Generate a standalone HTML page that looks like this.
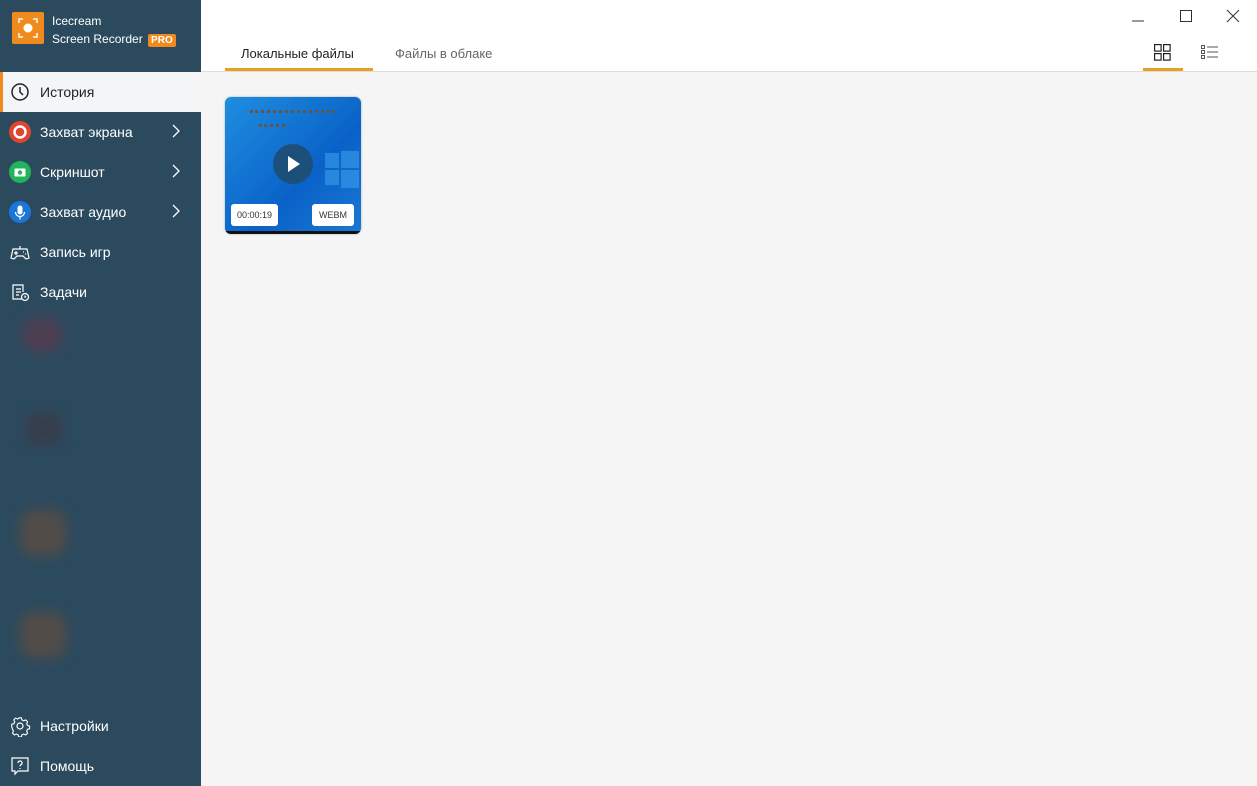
<!DOCTYPE html>
<html><head><meta charset="utf-8"><style>
body{margin:0;width:1257px;height:786px;overflow:hidden;font-family:"Liberation Sans",sans-serif;background:#f5f5f5;position:relative}
.sb{position:absolute;left:0;top:0;width:201px;height:786px;background:#2c4a5e;color:#fff}
.blob{position:absolute;border-radius:14px;filter:blur(6px)}
.item{position:absolute;left:0;width:201px;height:40px;font-size:14px;display:flex;align-items:center}
.item .ic{position:absolute;left:9px;top:9px;width:22px;height:22px}
.item span{position:absolute;left:40px}
.item .ch{position:absolute;left:172px;top:12px}
.top{position:absolute;left:201px;top:0;right:0;height:71px;background:#fff;border-bottom:1px solid #ddd}
</style></head><body>
<div class="sb">
<div class="blob" style="left:22px;top:318px;width:40px;height:34px;background:#4e3e52"></div>
<div class="blob" style="left:25px;top:412px;width:38px;height:34px;background:#373e4e"></div>
<div class="blob" style="left:20px;top:510px;width:46px;height:46px;background:#524c48"></div>
<div class="blob" style="left:20px;top:612px;width:46px;height:46px;background:#524c48"></div>
<div style="position:absolute;left:12px;top:12px;width:32px;height:32px;background:#f08a1c;border-radius:2px">
<svg width="32" height="32" viewBox="0 0 32 32" fill="none" stroke="#fff" stroke-width="1.5"><path d="M7 11V7h4M21 7h4v4M25 21v4h-4M11 25H7v-4"/><circle cx="16" cy="16" r="4.5" fill="#fff" stroke="none"/></svg></div>
<div style="position:absolute;left:52px;top:12px;font-size:12px;line-height:18px">Icecream<br>Screen Recorder <span style="background:#f08a1c;border-radius:2px;padding:1px 3px;font-weight:bold;font-size:10px;margin-left:2px">PRO</span></div>
<div class="item" style="top:72px;background:#f4f5f6;color:#222;border-left:3px solid #f08a1c;width:198px">
<svg class="ic" style="left:6px" viewBox="0 0 22 22" fill="none" stroke="#222" stroke-width="1.5"><circle cx="11" cy="11" r="8"/><path d="M11 6v5l3 3"/></svg><span style="left:37px">История</span></div>
<div class="item" style="top:112px"><svg class="ic" viewBox="0 0 22 22"><circle cx="11" cy="11" r="11" fill="#e0442f"/><circle cx="11" cy="11" r="5.5" fill="none" stroke="#fff" stroke-width="2.5"/></svg><span>Захват экрана</span><svg class="ch" width="8" height="14" fill="none" stroke="#fff" stroke-width="1.3"><path d="M1 1l6 6-6 6"/></svg></div>
<div class="item" style="top:152px"><svg class="ic" viewBox="0 0 22 22"><circle cx="11" cy="11" r="11" fill="#22b45a"/><rect x="5.5" y="7.5" width="11" height="8" rx="1" fill="#fff"/><circle cx="11" cy="11.5" r="2.2" fill="#22b45a"/></svg><span>Скриншот</span><svg class="ch" width="8" height="14" fill="none" stroke="#fff" stroke-width="1.3"><path d="M1 1l6 6-6 6"/></svg></div>
<div class="item" style="top:192px"><svg class="ic" viewBox="0 0 22 22"><circle cx="11" cy="11" r="11" fill="#1a76d8"/><rect x="8.5" y="4.5" width="5" height="9" rx="2.5" fill="#fff"/><path d="M6.5 11a4.5 4.5 0 0 0 9 0M11 15.5v3" fill="none" stroke="#fff" stroke-width="1.3"/></svg><span>Захват аудио</span><svg class="ch" width="8" height="14" fill="none" stroke="#fff" stroke-width="1.3"><path d="M1 1l6 6-6 6"/></svg></div>
<div class="item" style="top:232px"><svg class="ic" viewBox="0 0 22 22" fill="none" stroke="#fff" stroke-width="1.2"><path d="M4 8h14l2 9-3 1-3-3H8l-3 3-3-1z"/><path d="M7 10v4M5 12h4M14 11h1M16 13h1M11 5v3"/></svg><span>Запись игр</span></div>
<div class="item" style="top:272px"><svg class="ic" viewBox="0 0 22 22" fill="none" stroke="#fff" stroke-width="1.2"><path d="M13 18H4V4h10v7"/><path d="M7 8h5M7 11h5M7 14h3"/><circle cx="16" cy="16" r="3.5"/><path d="M16 14.5V16h1.2"/></svg><span>Задачи</span></div>
<div class="item" style="top:706px"><svg class="ic" viewBox="0 0 22 22" fill="none" stroke="#fff" stroke-width="1.2"><circle cx="11" cy="11" r="3"/><path d="M9.5 3h3l.5 2.3 2 1 2.2-1 2 2.1-1 2.1.9 2 2.3.5v3l-2.3.5-.9 2 1 2.2-2 2-2.2-1-2 .9-.5 2.3h-3l-.5-2.3-2-.9-2.2 1-2-2 1-2.2-.9-2L2 13v-3l2.3-.5.9-2-1-2.2 2-2 2.2 1 2-1z" transform="scale(.92) translate(1 0)"/></svg><span>Настройки</span></div>
<div class="item" style="top:746px"><svg class="ic" viewBox="0 0 22 22" fill="none" stroke="#fff" stroke-width="1.2"><path d="M3 3h16v13H9l-3 3v-3H3z"/><path d="M9 8a2 2 0 1 1 3 1.7c-.7.4-1 .8-1 1.6M11 13v1"/></svg><span>Помощь</span></div>
</div>
<div class="top">
<div style="position:absolute;left:40px;top:46px;font-size:13px;color:#222">Локальные файлы</div>
<div style="position:absolute;left:24px;top:68px;width:148px;height:3px;background:#e8a020"></div>
<div style="position:absolute;left:194px;top:46px;font-size:13px;color:#666">Файлы в облаке</div>
<svg style="position:absolute;left:930px;top:10px" width="14" height="14" fill="none" stroke="#333"><path d="M1 11h12"/></svg>
<svg style="position:absolute;left:978px;top:9px" width="14" height="14" fill="none" stroke="#333"><rect x="1.5" y="1.5" width="11" height="11"/></svg>
<svg style="position:absolute;left:1025px;top:9px" width="14" height="14" fill="none" stroke="#333"><path d="M1 1l12 12M13 1L1 13"/></svg>
<svg style="position:absolute;left:953px;top:44px" width="17" height="17" fill="none" stroke="#222" stroke-width="1.2"><rect x=".6" y=".6" width="6.5" height="6.5"/><rect x="9.6" y=".6" width="6.5" height="6.5"/><rect x=".6" y="9.6" width="6.5" height="6.5"/><rect x="9.6" y="9.6" width="6.5" height="6.5"/></svg>
<div style="position:absolute;left:942px;top:68px;width:40px;height:3px;background:#e8a020"></div>
<svg style="position:absolute;left:1000px;top:44px" width="18" height="16" fill="none" stroke="#555" stroke-width="1"><rect x=".5" y="1.5" width="3" height="3"/><rect x=".5" y="6.5" width="3" height="3"/><rect x=".5" y="11.5" width="3" height="3"/><path d="M6 3h11M6 8h11M6 13h11"/></svg>
</div>
<div style="position:absolute;left:225px;top:97px;width:136px;height:137px;border-radius:6px;overflow:hidden;background:linear-gradient(135deg,#1f8ee0,#0a62c8 60%,#1a78d4);box-shadow:0 0 2px rgba(0,0,0,.3)">
<div style="position:absolute;left:100px;top:56px;width:14px;height:15px;background:#3ea2ec;opacity:.55"></div>
<div style="position:absolute;left:116px;top:54px;width:18px;height:17px;background:#3ea2ec;opacity:.55"></div>
<div style="position:absolute;left:100px;top:73px;width:14px;height:15px;background:#3ea2ec;opacity:.55"></div>
<div style="position:absolute;left:116px;top:73px;width:18px;height:18px;background:#3ea2ec;opacity:.55"></div>
<div style="position:absolute;left:48px;top:47px;width:40px;height:40px;border-radius:50%;background:#1c4f7a"></div>
<svg style="position:absolute;left:62px;top:58px" width="14" height="18"><path d="M1 1l12 8-12 8z" fill="#fff"/></svg>
<div style="position:absolute;left:25px;top:13px;width:85px;height:3px;border-top:3px dotted #654"></div>
<div style="position:absolute;left:34px;top:27px;width:26px;height:3px;border-top:3px dotted #654"></div>
<div style="position:absolute;left:6px;top:107px;width:47px;height:22px;background:#fff;border-radius:3px;font-size:9px;color:#333;line-height:22px;text-align:center">00:00:19</div>
<div style="position:absolute;left:87px;top:107px;width:42px;height:22px;background:#fff;border-radius:3px;font-size:9px;color:#333;line-height:22px;text-align:center">WEBM</div>
<div style="position:absolute;left:0;bottom:0;width:136px;height:3px;background:#111"></div>
</div>
</body></html>
